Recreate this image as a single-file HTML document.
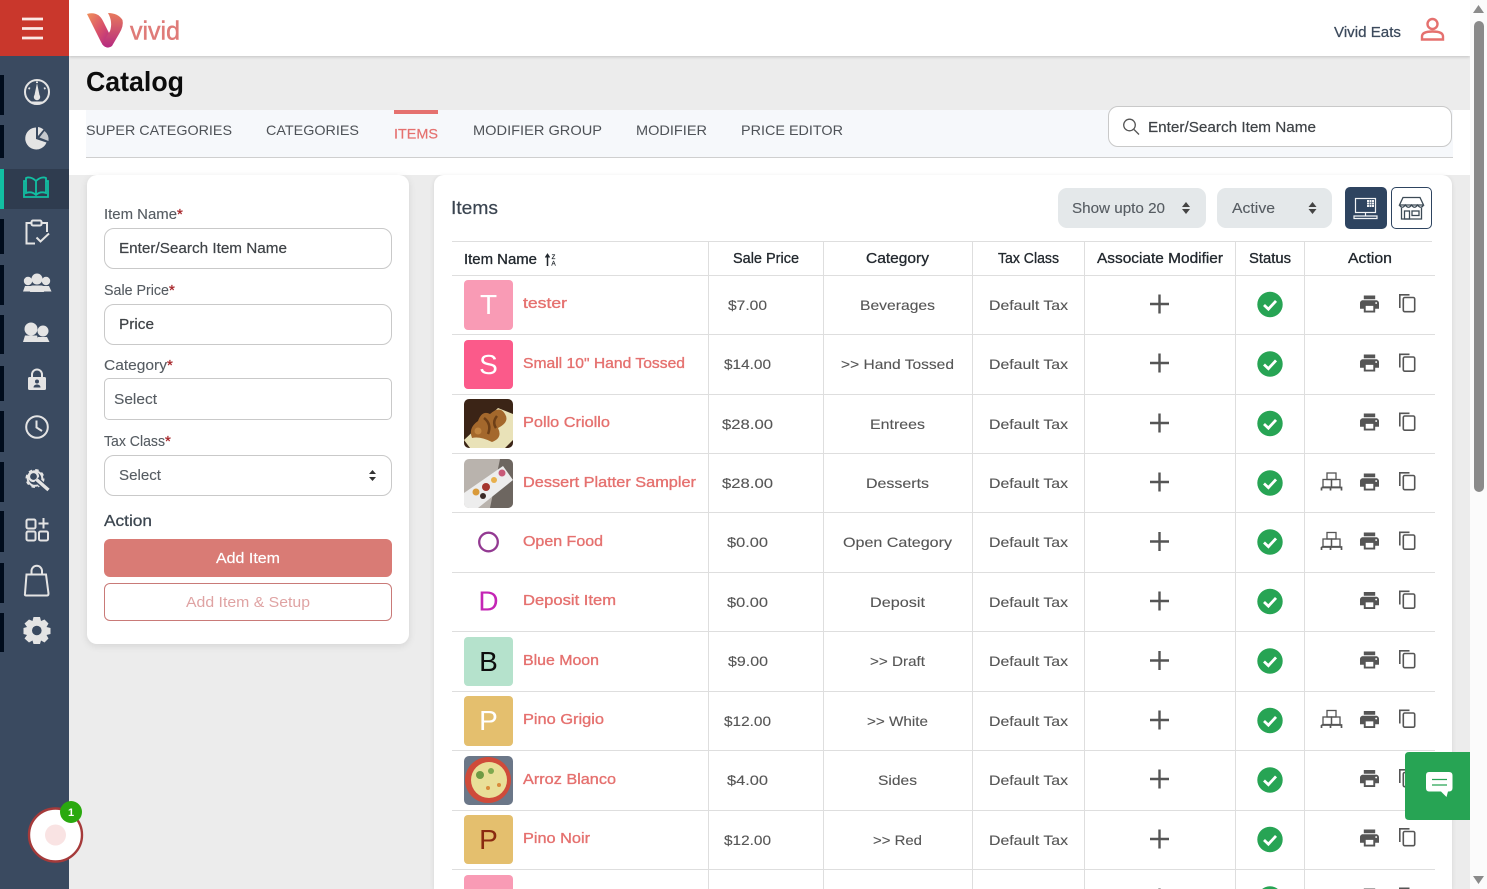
<!DOCTYPE html>
<html lang="en"><head><meta charset="utf-8"><title>Catalog</title>
<style>
html,body{margin:0;padding:0;width:1487px;height:889px;overflow:hidden;background:#fff;font-family:"Liberation Sans",sans-serif}
div{position:absolute;box-sizing:border-box}
#page{left:0;top:0;width:1487px;height:889px;overflow:hidden;background:#fff}
svg{position:absolute;left:0;top:0}
.inp{background:#fff;border:1px solid #c9c9c9;border-radius:10px;left:104px;width:288px}
text{font-family:"Liberation Sans",sans-serif;font-size:14px;fill:#555;letter-spacing:0}
.t{fill:#565656;font-size:14px;stroke:#565656;stroke-width:.12}
.tab{fill:#4e5257;font-size:14px}
.n{fill:#e5716f;font-size:15px;stroke:#e5716f;stroke-width:.35}
.h{fill:#22282e;font-size:14.5px;stroke:#22282e;stroke-width:.3}
.l{fill:#565c62;font-size:15px;stroke:#565c62;stroke-width:.12}
.i{fill:#3f4347;font-size:15px;stroke:#3f4347;stroke-width:.2}
.r{fill:#a8282c;font-size:15px;stroke:#a8282c;stroke-width:.3}
.c{text-anchor:middle}
.ln{stroke:#dedede;stroke-width:1}
.ic{fill:none;stroke:#e4e4e4;stroke-width:2}
.if{fill:#e4e4e4}
</style></head>
<body>
<div id="page">
<div style="left:69px;top:56px;width:1401px;height:833px;background:#ececec"></div>
<div style="left:69px;top:110px;width:1401px;height:65px;background:#fff"></div>
<div style="left:86px;top:110px;width:1367px;height:48px;background:#f6f8fb;border-bottom:1px solid #cfcfcf"></div>
<div style="left:69px;top:0;width:1401px;height:56px;background:#fff;box-shadow:0 1px 3px rgba(0,0,0,.18)"></div>
<div style="left:1470px;top:0;width:17px;height:889px;background:#fbfbfb"></div>
<div style="left:0;top:0;width:69px;height:889px;background:#3a4a60"></div>
<div style="left:0;top:0;width:69px;height:56px;background:#c9372c"></div>
<div style="left:4px;top:169px;width:65px;height:40px;background:#2f3c4f"></div>
<div style="left:394px;top:110px;width:44px;height:4px;background:#e5716f"></div>
<div class="inp" style="left:1108px;top:106px;width:344px;height:41px"></div>
<div style="left:87px;top:175px;width:322px;height:469px;background:#fff;border-radius:10px;box-shadow:0 2px 8px rgba(0,0,0,.1)"></div>
<div style="left:434px;top:175px;width:1018px;height:714px;background:#fff;border-radius:10px 10px 0 0;box-shadow:0 1px 5px rgba(0,0,0,.1)"></div>
<div class="inp" style="top:228px;height:41px"></div>
<div class="inp" style="top:304px;height:41px"></div>
<div class="inp" style="top:378px;height:42px;border-radius:5px"></div>
<div class="inp" style="top:455px;height:41px"></div>
<div style="left:104px;top:539px;width:288px;height:38px;background:#d97b75;border-radius:6px"></div>
<div style="left:104px;top:583px;width:288px;height:38px;background:#fff;border:1px solid #c97a78;border-radius:6px"></div>
<div style="left:1058px;top:188px;width:148px;height:40px;background:#e4e8ea;border-radius:9px"></div>
<div style="left:1217px;top:188px;width:115px;height:40px;background:#e4e8ea;border-radius:9px"></div>
<div style="left:1345px;top:187px;width:42px;height:42px;background:#2e4460;border-radius:5px"></div>
<div style="left:1391px;top:187px;width:41px;height:42px;background:#fff;border:1px solid #2e4460;border-radius:5px"></div>

<svg width="1487" height="889" viewBox="0 0 1487 889" xmlns="http://www.w3.org/2000/svg">
<defs>
<linearGradient id="lg" x1="0" y1="0" x2="1" y2="1"><stop offset="0" stop-color="#f0905a"/><stop offset=".5" stop-color="#d8506a"/><stop offset="1" stop-color="#a81f8c"/></linearGradient>
<linearGradient id="lg2" x1="0" y1="0" x2="0" y2="1"><stop offset="0" stop-color="#e87a5c"/><stop offset="1" stop-color="#b52a80"/></linearGradient>
<g id="plus"><path d="M-9.5 0H9.5M0-9.5V9.5" stroke="#555" stroke-width="2.4" fill="none"/></g>
<g id="chk"><circle r="12.7" fill="#27a454"/><path d="M-6 .5L-1.6 4.6 6 -3.6" fill="none" stroke="#fff" stroke-width="2.8"/></g>
<g id="prt"><path transform="scale(.95) translate(-12,-12)" fill="#555" d="M19 8H5c-1.66 0-3 1.34-3 3v6h4v4h12v-4h4v-6c0-1.66-1.34-3-3-3zm-3 11H8v-5h8v5zm3-7c-.55 0-1-.45-1-1s.45-1 1-1 1 .45 1 1-.45 1-1 1zm-1-9H6v4h12V3z"/></g>
<g id="cpy" fill="none" stroke="#555" stroke-width="1.6"><path d="M-7.2 4V-9.2H2.5"/><rect x="-3.7" y="-6.5" width="11.4" height="14.2" rx="1.5"/></g>
<g id="pal" fill="none" stroke="#555" stroke-width="1.3"><rect x="-4.5" y="-9" width="9" height="6.5"/><rect x="-8.5" y="-2.5" width="8.5" height="7.5"/><rect x="0" y="-2.5" width="8.5" height="7.5"/><path d="M-10 5.500H10V8.500M-10 5.500V8.500M-1 5.500V8.500" stroke-width="1.700"/></g>
<clipPath id="cp3"><rect x="464" y="399" width="49" height="49" rx="5"/></clipPath>
<clipPath id="cp4"><rect x="464" y="459" width="49" height="49" rx="5"/></clipPath>
<clipPath id="cp9"><rect x="464" y="756" width="49" height="49" rx="5"/></clipPath>
</defs>

<!-- hamburger -->
<path d="M22 19H43M22 28.500H43M22 38H43" stroke="#fbe9e5" stroke-width="2.800" fill="none"/>
<!-- sidebar bars -->
<g fill="#000c1c"><rect y="75" width="4" height="40"/><rect y="125" width="4" height="33"/><rect y="219" width="4" height="35"/><rect y="265" width="4" height="40"/><rect y="315" width="4" height="39"/><rect y="366" width="4" height="35"/><rect y="411" width="4" height="41"/><rect y="462" width="4" height="40"/><rect y="511" width="4" height="41"/><rect y="563" width="4" height="40"/><rect y="613" width="4" height="39"/></g>
<rect y="169" width="4" height="40" fill="#12bfa2"/>
<!-- gauge -->
<circle cx="37" cy="92" r="12" class="ic" stroke-width="2.200"/><path d="M37 83L39.500 95A3.200 3.200 0 1 1 34.500 95Z" class="if"/><path d="M37 81.500V83M28.500 88l1.500 .8M45.500 88l-1.500 .8M31 102.500H43" class="ic" stroke-width="1.500"/>
<!-- pie -->
<path d="M36 127.500A11 11 0 1 0 46.500 142.500L36 139Z" class="if"/><path d="M38 127A11 11 0 0 1 43.500 129.500L38 136Z" class="if"/><path d="M44.500 131A11 11 0 0 1 48.500 141L39.500 137.500Z" fill="#c4c8cd"/>
<!-- book -->
<g fill="none" stroke="#12bfa2" stroke-width="1.800"><path d="M36 181C32 177 28 177 26 178V193C29 192 33 192 36 195C39 192 43 192 46 193V178C44 177 40 177 36 181V195"/><path d="M26 181H24V197H48V181H46"/></g>
<!-- clipboard -->
<path d="M31 223H26.500V243.500H35M41.500 223H47V232" class="ic" stroke-width="2.400"/><rect x="31.500" y="220.500" width="10" height="5" rx="1.500" class="ic" stroke-width="2"/><path d="M36.500 237.500L40.500 241.500 49 233.500" class="ic" stroke-width="2.800"/>
<!-- people -->
<g class="if"><circle cx="37" cy="279" r="5.500"/><circle cx="28" cy="281" r="4.200"/><circle cx="46" cy="281" r="4.200"/><path d="M23 291.500L25 286H32L31 291.500ZM30 292L31.500 285.500H42.500L44 292ZM43 291.500L42 286H49L51.500 291.500Z"/></g>
<!-- two people -->
<g class="if"><circle cx="31" cy="329" r="6.500"/><circle cx="43" cy="331" r="5.500"/><path d="M23 342L25 335.500H37L39 342ZM37 342L38 337H47L49.500 342Z"/></g>
<!-- lock -->
<path d="M32 377V374.500A5 5 0 0 1 42 374.500V377" class="ic" stroke-width="2.400"/><rect x="28" y="377" width="18" height="13" rx="1.500" class="if"/><circle cx="37" cy="381.500" r="2" fill="#3a4a60"/><path d="M33.500 387.500C33.500 383.500 40.500 383.500 40.500 387.500Z" fill="#3a4a60"/>
<!-- clock -->
<circle cx="37" cy="427" r="10.800" class="ic" stroke-width="2.400"/><path d="M36.500 420.500V427.500L42 431" class="ic" stroke-width="2.200"/>
<!-- wrench gear -->
<circle cx="35" cy="478.500" r="8.500" class="ic" stroke-width="3.800" stroke-dasharray="3.500 3.170"/><circle cx="35" cy="478.500" r="7.300" class="ic" stroke-width="2"/>
<circle cx="33.500" cy="476.500" r="4.500" fill="#3a4a60" stroke="#e4e4e4" stroke-width="2.200"/><path d="M36.500 479.500L48.500 490.500" stroke="#3a4a60" stroke-width="6"/><path d="M36.500 479.500L48.500 490" stroke="#e4e4e4" stroke-width="3.400"/>
<!-- apps -->
<g class="ic" stroke-width="2.500"><rect x="26.500" y="519.500" width="9" height="9" rx="1.500"/><rect x="26.500" y="531.500" width="9" height="9" rx="1.500"/><rect x="39" y="531.500" width="9" height="9" rx="1.500"/><path d="M43.500 518V528.500M38.500 523.500H48.500"/></g>
<!-- bag -->
<path d="M26.500 574.500H46L48.500 593.500Q48.500 595.500 47 595.500H26Q24.500 595.500 25 593.500Z" class="ic" stroke-width="1.800"/><path d="M31.500 574.500V571A5.200 5.200 0 0 1 42 571V574.500" class="ic" stroke-width="1.800"/>
<!-- gear -->
<path class="if" d="M33.500 617H40L41 621L44.500 619.500L48.500 623.500L46.500 627L50.500 628V634L46.500 635L48.500 638.500L44.500 642.500L41 640.500L40 644H33.500L32.500 640.500L29 642.500L24.500 638.500L27 635L23.500 634V628L27 627L24.500 623.500L29 619.500L32.500 621Z"/><circle cx="36.800" cy="630.500" r="4.800" fill="#3a4a60"/>
<!-- bubble -->
<circle cx="55.500" cy="835" r="26.500" fill="#fff" stroke="#a53a3a" stroke-width="2.400"/><circle cx="55.500" cy="835" r="10.500" fill="#f9e3e3"/><circle cx="71" cy="812" r="11" fill="#2aa90f"/><text x="71" y="816" class="c" style="fill:#fff;font-size:11px;font-weight:bold">1</text>

<!-- logo -->
<path d="M87 14Q98 11 103 21L112 39Q114 44 108 47Q104 48 101 42Z" fill="url(#lg)"/>
<path d="M108 13Q118 13 122.500 20Q124 26 119 34L112 46Q107 50 102 44L110 31Q113 22 108 13Z" fill="url(#lg2)"/>
<text x="130" y="39.500" textLength="50" lengthAdjust="spacingAndGlyphs" style="font-size:26px;fill:#df7b78;stroke:#df7b78;stroke-width:.5">vivid</text>
<!-- header right -->
<text x="1334" y="37" textLength="67" lengthAdjust="spacingAndGlyphs" style="font-size:15px;fill:#3c4a5c;stroke:#3c4a5c;stroke-width:.25">Vivid Eats</text>
<circle cx="1432.500" cy="24" r="5" fill="none" stroke="#e5716f" stroke-width="2.400"/><path d="M1422 39.500V36.500C1422 33 1426 31.500 1432.500 31.500C1439 31.500 1443 33 1443 36.500V39.500Z" fill="none" stroke="#e5716f" stroke-width="2.400"/>
<!-- scrollbar -->
<path d="M1478.500 5L1484 13H1473Z" fill="#8a8a8a"/><rect x="1474" y="21" width="10" height="471" rx="5" fill="#8a8a8a"/><path d="M1473 876H1484L1478.500 884Z" fill="#8a8a8a"/>

<!-- title and tabs -->
<text x="86" y="91" textLength="98" lengthAdjust="spacingAndGlyphs" style="font-size:28px;font-weight:bold;fill:#0c0c0c">Catalog</text>
<text x="86" y="135" textLength="146" lengthAdjust="spacingAndGlyphs" class="tab">SUPER CATEGORIES</text>
<text x="266" y="135" textLength="93" lengthAdjust="spacingAndGlyphs" class="tab">CATEGORIES</text>
<text x="394" y="138.500" textLength="44" lengthAdjust="spacingAndGlyphs" class="tab" style="fill:#e5716f;stroke:#e5716f;stroke-width:.2">ITEMS</text>
<text x="473" y="135" textLength="129" lengthAdjust="spacingAndGlyphs" class="tab">MODIFIER GROUP</text>
<text x="636" y="135" textLength="71" lengthAdjust="spacingAndGlyphs" class="tab">MODIFIER</text>
<text x="741" y="135" textLength="102" lengthAdjust="spacingAndGlyphs" class="tab">PRICE EDITOR</text>
<circle cx="1129.500" cy="125" r="5.800" fill="none" stroke="#555" stroke-width="1.300"/><path d="M1134 129.500L1139 134.500" stroke="#555" stroke-width="1.300"/>
<text x="1148" y="132" textLength="168" lengthAdjust="spacingAndGlyphs" class="i">Enter/Search Item Name</text>

<!-- left form -->
<text x="104" y="219" textLength="73" lengthAdjust="spacingAndGlyphs" class="l">Item Name</text><text x="177" y="219" class="r">*</text>
<text x="119" y="253" textLength="168" lengthAdjust="spacingAndGlyphs" class="i">Enter/Search Item Name</text>
<text x="104" y="295" textLength="65" lengthAdjust="spacingAndGlyphs" class="l">Sale Price</text><text x="169" y="295" class="r">*</text>
<text x="119" y="329" textLength="35" lengthAdjust="spacingAndGlyphs" class="i">Price</text>
<text x="104" y="370" textLength="63" lengthAdjust="spacingAndGlyphs" class="l">Category</text><text x="167" y="370" class="r">*</text>
<text x="114" y="404" textLength="43" lengthAdjust="spacingAndGlyphs" class="l">Select</text>
<text x="104" y="446" textLength="61" lengthAdjust="spacingAndGlyphs" class="l">Tax Class</text><text x="165" y="446" class="r">*</text>
<text x="119" y="480" textLength="42" lengthAdjust="spacingAndGlyphs" class="l">Select</text>
<path d="M372.500 470L376 474H369ZM372.500 481L376 477H369Z" fill="#333"/>
<text x="104" y="526" textLength="48" lengthAdjust="spacingAndGlyphs" style="font-size:16px;fill:#3c4650;stroke:#3c4650;stroke-width:.25">Action</text>
<text x="216" y="563" textLength="64" lengthAdjust="spacingAndGlyphs" style="font-size:14.500px;fill:#fff;stroke:#fff;stroke-width:.2">Add Item</text>
<text x="186" y="607" textLength="124" lengthAdjust="spacingAndGlyphs" style="font-size:14.500px;fill:#dfa3a3">Add Item &amp; Setup</text>

<!-- items top -->
<text x="451" y="214" textLength="47" lengthAdjust="spacingAndGlyphs" style="font-size:18px;fill:#3a4450;stroke:#3a4450;stroke-width:.2">Items</text>
<text x="1072" y="213" textLength="93" lengthAdjust="spacingAndGlyphs" class="l">Show upto 20</text>
<path d="M1186 202L1190 207H1182ZM1186 214L1190 209H1182Z" fill="#444"/>
<text x="1232" y="213" textLength="43" lengthAdjust="spacingAndGlyphs" class="l">Active</text>
<path d="M1312.500 202L1316.500 207H1308.500ZM1312.500 214L1316.500 209H1308.500Z" fill="#444"/>
<!-- pos icon -->
<g fill="none" stroke="#f2f4f6" stroke-width="1.200"><rect x="1355.500" y="198.500" width="20" height="14"/><path d="M1365.500 213V216M1354 216H1377V218.500H1354Z"/></g><rect x="1367" y="200" width="7" height="7" fill="#f2f4f6"/><path d="M1369.300 200V207M1371.600 200V207M1367 202.300H1374M1367 204.600H1374" stroke="#2e4460" stroke-width=".5"/>
<!-- store icon -->
<g fill="none" stroke="#3c4a55" stroke-width="1.300"><path d="M1403 197.500H1420L1423.500 205H1399.500Z"/><path d="M1399.500 205Q1402 209.500 1405.300 205Q1408.500 209.500 1411.500 205Q1414.500 209.500 1417.500 205Q1421 209.500 1423.500 205"/><path d="M1401.500 208V219H1421.500V208"/><rect x="1404.500" y="211" width="5" height="8"/><rect x="1412" y="211" width="7" height="4.500"/></g>

<!-- table lines -->
<g class="ln">
<path d="M452 241.500H1432M452 275.500H1435M452 334.500H1435M452 394.500H1435M452 453.500H1435M452 512.500H1435M452 572.500H1435M452 631.500H1435M452 691.500H1435M452 750.500H1435M452 810.500H1435M452 869.500H1435"/>
<path d="M708.500 241V889M823.500 241V889M972.500 241V889M1084.500 241V889M1235.500 241V889M1304.500 241V889"/>
</g>
<!-- header -->
<text x="464" y="264" textLength="73" lengthAdjust="spacingAndGlyphs" class="h">Item Name</text>
<path d="M547.500 266V255M545.500 257.500L547.500 254.500 549.500 257.500" stroke="#22282e" stroke-width="1.500" fill="none"/>
<text x="553.500" y="259" class="c" style="font-size:6px;fill:#22282e;stroke:#22282e;stroke-width:.2">Z</text><text x="553.500" y="265.500" class="c" style="font-size:6.500px;fill:#22282e;stroke:#22282e;stroke-width:.2">A</text>
<text x="733" y="263" textLength="66" lengthAdjust="spacingAndGlyphs" class="h">Sale Price</text>
<text x="866" y="263" textLength="63" lengthAdjust="spacingAndGlyphs" class="h">Category</text>
<text x="998" y="263" textLength="61" lengthAdjust="spacingAndGlyphs" class="h">Tax Class</text>
<text x="1097" y="263" textLength="126" lengthAdjust="spacingAndGlyphs" class="h">Associate Modifier</text>
<text x="1249" y="263" textLength="42" lengthAdjust="spacingAndGlyphs" class="h">Status</text>
<text x="1348" y="263" textLength="44" lengthAdjust="spacingAndGlyphs" class="h">Action</text>

<!-- thumbs -->
<rect x="464" y="280" width="49" height="50" rx="4" fill="#f99bb5"/><text x="488.500" y="314" class="c" style="font-size:28px;fill:#fff">T</text>
<rect x="464" y="340" width="49" height="49" rx="4" fill="#fb5a8a"/><text x="488.500" y="374" class="c" style="font-size:28px;fill:#fff">S</text>
<g clip-path="url(#cp3)"><rect x="464" y="399" width="49" height="49" fill="#3b2416"/><path d="M464 440L498 408 513 414V440L505 448H470Z" fill="#e9e2b8"/><path d="M472 438Q468 428 478 421Q482 410 490 414Q500 405 505 414Q510 422 498 428Q503 438 492 442Q480 436 472 438Z" fill="#a4682c"/><path d="M484 418Q492 424 488 434M497 416Q492 422 496 428" stroke="#6d3f17" stroke-width="2.500" fill="none"/><circle cx="478" cy="431" r="3.500" fill="#c08440"/></g>
<g clip-path="url(#cp4)"><rect x="464" y="459" width="49" height="49" fill="#b9b3ad"/><path d="M500 459H513V508H490Z" fill="#6d6660"/><path d="M464 493L503 466 513 480 478 508H464Z" fill="#ededed"/><circle cx="476" cy="492" r="3.500" fill="#d99a3a"/><circle cx="486" cy="487" r="4" fill="#a4352e"/><circle cx="494" cy="480" r="3" fill="#e8b04c"/><circle cx="502" cy="473" r="3.500" fill="#c85a78"/><circle cx="483" cy="496" r="3" fill="#3a2a26"/></g>
<circle cx="488.500" cy="542" r="9.300" fill="none" stroke="#933a92" stroke-width="2.300"/>
<text x="488.500" y="610.500" class="c" style="font-size:28px;fill:#c425b5">D</text>
<rect x="464" y="637" width="49" height="49" rx="4" fill="#b5e2cc"/><text x="488.500" y="671" class="c" style="font-size:28px;fill:#0d0d0d">B</text>
<rect x="464" y="696" width="49" height="50" rx="4" fill="#e4bf6e"/><text x="488.500" y="730" class="c" style="font-size:28px;fill:#fff">P</text>
<g clip-path="url(#cp9)"><rect x="464" y="756" width="49" height="49" fill="#6b7788"/><circle cx="488" cy="780" r="23" fill="#cf4b3a"/><circle cx="489" cy="780" r="18" fill="#e9df98"/><circle cx="480" cy="775" r="4" fill="#6f9a44"/><circle cx="491" cy="771" r="3" fill="#7fa84e"/><circle cx="499" cy="785" r="2" fill="#d98b3a"/><circle cx="488" cy="788" r="2" fill="#d98b3a"/></g>
<rect x="464" y="815" width="49" height="49" rx="4" fill="#e4bf6e"/><text x="488.500" y="849" class="c" style="font-size:28px;fill:#8a2a10">P</text>
<rect x="464" y="875" width="49" height="30" rx="4" fill="#f99bb5"/>

<!-- names -->
<text x="523" y="308" textLength="44" lengthAdjust="spacingAndGlyphs" class="n">tester</text>
<text x="523" y="368" textLength="162" lengthAdjust="spacingAndGlyphs" class="n">Small 10" Hand Tossed</text>
<text x="523" y="427" textLength="87" lengthAdjust="spacingAndGlyphs" class="n">Pollo Criollo</text>
<text x="523" y="487" textLength="173" lengthAdjust="spacingAndGlyphs" class="n">Dessert Platter Sampler</text>
<text x="523" y="546" textLength="80" lengthAdjust="spacingAndGlyphs" class="n">Open Food</text>
<text x="523" y="605" textLength="93" lengthAdjust="spacingAndGlyphs" class="n">Deposit Item</text>
<text x="523" y="665" textLength="76" lengthAdjust="spacingAndGlyphs" class="n">Blue Moon</text>
<text x="523" y="724" textLength="81" lengthAdjust="spacingAndGlyphs" class="n">Pino Grigio</text>
<text x="523" y="784" textLength="93" lengthAdjust="spacingAndGlyphs" class="n">Arroz Blanco</text>
<text x="523" y="843" textLength="67" lengthAdjust="spacingAndGlyphs" class="n">Pino Noir</text>

<!-- prices -->
<text x="728" y="310" textLength="39" lengthAdjust="spacingAndGlyphs" class="t">$7.00</text>
<text x="724" y="369" textLength="47" lengthAdjust="spacingAndGlyphs" class="t">$14.00</text>
<text x="722" y="429" textLength="51" lengthAdjust="spacingAndGlyphs" class="t">$28.00</text>
<text x="722" y="488" textLength="51" lengthAdjust="spacingAndGlyphs" class="t">$28.00</text>
<text x="727" y="547" textLength="41" lengthAdjust="spacingAndGlyphs" class="t">$0.00</text>
<text x="727" y="607" textLength="41" lengthAdjust="spacingAndGlyphs" class="t">$0.00</text>
<text x="728" y="666" textLength="40" lengthAdjust="spacingAndGlyphs" class="t">$9.00</text>
<text x="724" y="726" textLength="47" lengthAdjust="spacingAndGlyphs" class="t">$12.00</text>
<text x="727" y="785" textLength="41" lengthAdjust="spacingAndGlyphs" class="t">$4.00</text>
<text x="724" y="845" textLength="47" lengthAdjust="spacingAndGlyphs" class="t">$12.00</text>

<!-- categories -->
<text x="860" y="310" textLength="75" lengthAdjust="spacingAndGlyphs" class="t">Beverages</text>
<text x="841" y="369" textLength="113" lengthAdjust="spacingAndGlyphs" class="t">&gt;&gt; Hand Tossed</text>
<text x="870" y="429" textLength="55" lengthAdjust="spacingAndGlyphs" class="t">Entrees</text>
<text x="866" y="488" textLength="63" lengthAdjust="spacingAndGlyphs" class="t">Desserts</text>
<text x="843" y="547" textLength="109" lengthAdjust="spacingAndGlyphs" class="t">Open Category</text>
<text x="870" y="607" textLength="55" lengthAdjust="spacingAndGlyphs" class="t">Deposit</text>
<text x="870" y="666" textLength="55" lengthAdjust="spacingAndGlyphs" class="t">&gt;&gt; Draft</text>
<text x="867" y="726" textLength="61" lengthAdjust="spacingAndGlyphs" class="t">&gt;&gt; White</text>
<text x="878" y="785" textLength="39" lengthAdjust="spacingAndGlyphs" class="t">Sides</text>
<text x="873" y="845" textLength="49" lengthAdjust="spacingAndGlyphs" class="t">&gt;&gt; Red</text>

<!-- tax -->
<text x="989" y="310" textLength="79" lengthAdjust="spacingAndGlyphs" class="t">Default Tax</text>
<text x="989" y="369" textLength="79" lengthAdjust="spacingAndGlyphs" class="t">Default Tax</text>
<text x="989" y="429" textLength="79" lengthAdjust="spacingAndGlyphs" class="t">Default Tax</text>
<text x="989" y="488" textLength="79" lengthAdjust="spacingAndGlyphs" class="t">Default Tax</text>
<text x="989" y="547" textLength="79" lengthAdjust="spacingAndGlyphs" class="t">Default Tax</text>
<text x="989" y="607" textLength="79" lengthAdjust="spacingAndGlyphs" class="t">Default Tax</text>
<text x="989" y="666" textLength="79" lengthAdjust="spacingAndGlyphs" class="t">Default Tax</text>
<text x="989" y="726" textLength="79" lengthAdjust="spacingAndGlyphs" class="t">Default Tax</text>
<text x="989" y="785" textLength="79" lengthAdjust="spacingAndGlyphs" class="t">Default Tax</text>
<text x="989" y="845" textLength="79" lengthAdjust="spacingAndGlyphs" class="t">Default Tax</text>

<!-- plus -->
<use href="#plus" x="1159.500" y="304"/><use href="#plus" x="1159.500" y="363"/><use href="#plus" x="1159.500" y="423"/><use href="#plus" x="1159.500" y="482"/><use href="#plus" x="1159.500" y="541.500"/><use href="#plus" x="1159.500" y="601"/><use href="#plus" x="1159.500" y="660.500"/><use href="#plus" x="1159.500" y="720"/><use href="#plus" x="1159.500" y="779"/><use href="#plus" x="1159.500" y="839"/><use href="#plus" x="1159.500" y="898"/>
<!-- check -->
<use href="#chk" x="1270" y="304.500"/><use href="#chk" x="1270" y="364"/><use href="#chk" x="1270" y="423.500"/><use href="#chk" x="1270" y="483"/><use href="#chk" x="1270" y="542"/><use href="#chk" x="1270" y="601.500"/><use href="#chk" x="1270" y="661"/><use href="#chk" x="1270" y="720.500"/><use href="#chk" x="1270" y="780"/><use href="#chk" x="1270" y="839.500"/><use href="#chk" x="1270" y="899"/>
<!-- printers -->
<use href="#prt" x="1369.500" y="304"/><use href="#prt" x="1369.500" y="363"/><use href="#prt" x="1369.500" y="422"/><use href="#prt" x="1369.500" y="482"/><use href="#prt" x="1369.500" y="541"/><use href="#prt" x="1369.500" y="600.500"/><use href="#prt" x="1369.500" y="660"/><use href="#prt" x="1369.500" y="719.500"/><use href="#prt" x="1369.500" y="778.500"/><use href="#prt" x="1369.500" y="838"/><use href="#prt" x="1369.500" y="897"/>
<!-- copies -->
<use href="#cpy" x="1407" y="304"/><use href="#cpy" x="1407" y="363.500"/><use href="#cpy" x="1407" y="422.500"/><use href="#cpy" x="1407" y="482"/><use href="#cpy" x="1407" y="541.500"/><use href="#cpy" x="1407" y="600.500"/><use href="#cpy" x="1407" y="660"/><use href="#cpy" x="1407" y="719.500"/><use href="#cpy" x="1407" y="779"/><use href="#cpy" x="1407" y="838"/><use href="#cpy" x="1407" y="897.500"/>
<!-- pallets -->
<use href="#pal" x="1331.500" y="482"/><use href="#pal" x="1331.500" y="541.500"/><use href="#pal" x="1331.500" y="719.500"/>

<!-- chat -->
<path d="M1409 752H1470V820H1409Q1405 820 1405 816V756Q1405 752 1409 752Z" fill="#27a454"/>
<path d="M1429 772H1449Q1452.500 772 1452.500 775.500V788Q1452.500 791.500 1449 791.500H1448L1446.500 797 1441 791.500H1429Q1426 791.500 1426 788V775.500Q1426 772 1429 772Z" fill="#fff"/>
<path d="M1432 779.500H1447M1432 785H1447" stroke="#27a454" stroke-width="1.300"/>
</svg>
</div>
</body></html>
